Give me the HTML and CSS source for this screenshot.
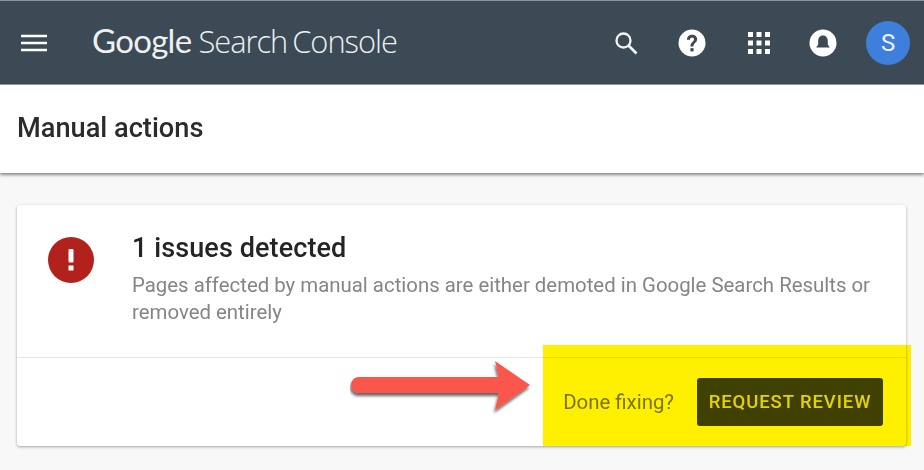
FILE: index.html
```html
<!DOCTYPE html>
<html lang="en">
<head>
<meta charset="utf-8">
<title>Manual actions</title>
<link rel="stylesheet" href="styles.css">
</head>
<body>
<div class="page">
  <header class="topbar">
    <div class="brand">
      <svg class="icon menu" viewBox="0 0 26 18" width="26" height="18"><path d="M0 2h26M0 9h26M0 16h26" stroke="#fff" stroke-width="2.4"/></svg>
      <div class="logo"><span class="logo-g">Google</span><span class="logo-s">Search</span><span class="logo-c">Console</span></div>
    </div>
    <div class="actions">
      <svg class="search" viewBox="0 0 26 26" width="26" height="26"><circle cx="10.5" cy="10.5" r="7" fill="none" stroke="#f2f4f4" stroke-width="2.3"/><path d="M15.5 15.5l8 8" stroke="#f2f4f4" stroke-width="2.6"/></svg>
      <svg class="help" viewBox="0 0 28 28" width="28" height="28"><circle cx="14" cy="14" r="13.5" fill="#fff"/><g transform="translate(14 14) scale(1.15) translate(-14 -14)"><path d="M9.6 11.2c0-2.6 2-4.3 4.5-4.3s4.4 1.6 4.4 3.9c0 2.9-3.2 3.2-3.2 6.2h-2.7c0-3.9 3.1-4.100 3.100-6.100 0-.9-.7-1.600-1.700-1.600s-1.700.8-1.700 1.900z" fill="#3b4a54"/><rect x="12.600" y="18.500" width="2.800" height="2.800" fill="#3b4a54"/></g></svg>
      <svg class="apps" viewBox="0 0 24 24" width="24" height="24"><path fill="#fff" d="M1 1h5v5H1zM9.500 1h5v5h-5zM18 1h5v5h-5zM1 9.500h5v5H1zM9.500 9.500h5v5h-5zM18 9.500h5v5h-5zM1 18h5v5H1zM9.500 18h5v5h-5zM18 18h5v5h-5z"/></svg>
      <svg class="bell" viewBox="0 0 28 28" width="28" height="28"><circle cx="14" cy="14" r="13.500" fill="#fff"/><path d="M14 6.500c3.400 0 4.800 2.700 4.800 5.500v3.500l2 3H7.200l2-3V12c0-2.800 1.400-5.500 4.800-5.500z" fill="#3b4a54"/></svg>
      <div class="avatar">S</div>
    </div>
  </header>
  <div class="page-head"><h1>Manual actions</h1></div>
  <main class="content">
    <section class="card">
      <div class="card-body">
        <svg class="alert" viewBox="0 0 46 46" width="46" height="46"><circle cx="23" cy="23" r="23" fill="#b3211c"/><rect x="20.500" y="12" width="5" height="13.500" rx="1" fill="#fff"/><rect x="20.500" y="28.500" width="5" height="5" fill="#fff"/></svg>
        <div class="card-text">
          <h2>1 issues detected</h2>
          <p>Pages affected by manual actions are either demoted in Google Search Results or removed entirely</p>
        </div>
      </div>
      <div class="card-foot">
        <span class="done">Done fixing?</span>
        <button class="review" type="button">REQUEST REVIEW</button>
      </div>
    </section>
  </main>
  <svg class="arrow" viewBox="0 0 200 70" width="200" height="70"><defs><filter id="sh" x="-10%" y="-20%" width="120%" height="150%"><feDropShadow dx="-1" dy="3" stdDeviation="1.600" flood-color="#000" flood-opacity=".6"/></filter></defs><path filter="url(#sh)" fill="#fb574c" d="M9 17h140l-4-16 35 24-35 25 4-17H9a5 5 0 0 1 0-16z"/></svg>
  <div class="marker"></div>
</div>
</body>
</html>
```
FILE: styles.css
```css
* { box-sizing: border-box; }
html, body { margin: 0; padding: 0; }
body { width: 924px; height: 470px; overflow: hidden; background: #f8f8f8; font-family: Roboto, "Liberation Sans", sans-serif; }
.page { position: relative; width: 924px; height: 470px; overflow: hidden; filter: blur(0.6px); }
.topbar { height: 85px; background: #3b4a54; border-top: 1px solid #8b9499; border-bottom: 1px solid #8f999e; display: flex; align-items: center; justify-content: space-between; padding: 0 14px 0 21px; }
.brand { display: flex; align-items: center; }
.menu { margin-right: 45px; }
.logo { color: #eef0f1; font-family: "Open Sans", sans-serif; font-weight: 300; font-size: 30.800px; letter-spacing: -1px; display: flex; align-items: baseline; margin-top: -3px; }
.logo-g { font-family: Lato, sans-serif; font-size: 33px; font-weight: 400; letter-spacing: -0.7px; margin-right: 7px; }
.logo-s { margin-right: 5px; }
.actions { display: flex; align-items: center; }
.search { margin-right: 39px; }
.help { margin-right: 41px; }
.apps { margin-right: 38px; }
.bell { margin-right: 29px; }
.avatar { width: 44px; height: 44px; border-radius: 50%; background: #3f7fdc; color: #eef3fb; font-size: 24px; display: flex; align-items: center; justify-content: center; }
.page-head { height: 88px; background: #fff; display: flex; align-items: center; padding-left: 17px; box-shadow: 0 2px 3px rgba(0,0,0,.45); position: relative; }
h1 { margin: 0 0 3px; font-size: 27.200px; font-weight: 500; color: #2b2b2b; }
.content { padding: 32px 18px 0 17px; }
.card { background: #fff; height: 241px; border-radius: 3px; box-shadow: 0 1px 3px rgba(0,0,0,.35); display: flex; flex-direction: column; }
.card-body { height: 153px; display: flex; padding: 29px 30px 0 31px; border-bottom: 1px solid #e6e6e6; }
.alert { flex: none; margin-right: 38px; margin-top: 3px; }
.card-text { flex: 1; margin-top: -1px; }
h2 { margin: 0 0 9px; font-size: 27px; font-weight: 500; color: #242424; line-height: 30px; letter-spacing: .1px; }
p { margin: 0; font-size: 20.400px; line-height: 27px; color: #858585; }
.card-foot { flex: 1; display: flex; align-items: center; justify-content: flex-end; padding: 0 23px 0 0; }
.done { font-size: 20.400px; color: #7a7a7a; margin-right: 23px; }
.review { width: 186px; height: 48px; border: 0; border-radius: 3px; background: #404400; color: #e2e2e2; font: 500 18.500px Roboto, sans-serif; letter-spacing: .9px; padding: 0; }
.arrow { position: absolute; left: 350px; top: 360px; }
.marker { position: absolute; left: 543px; top: 345px; width: 368px; height: 101px; background: #fff000; mix-blend-mode: multiply; }
```
